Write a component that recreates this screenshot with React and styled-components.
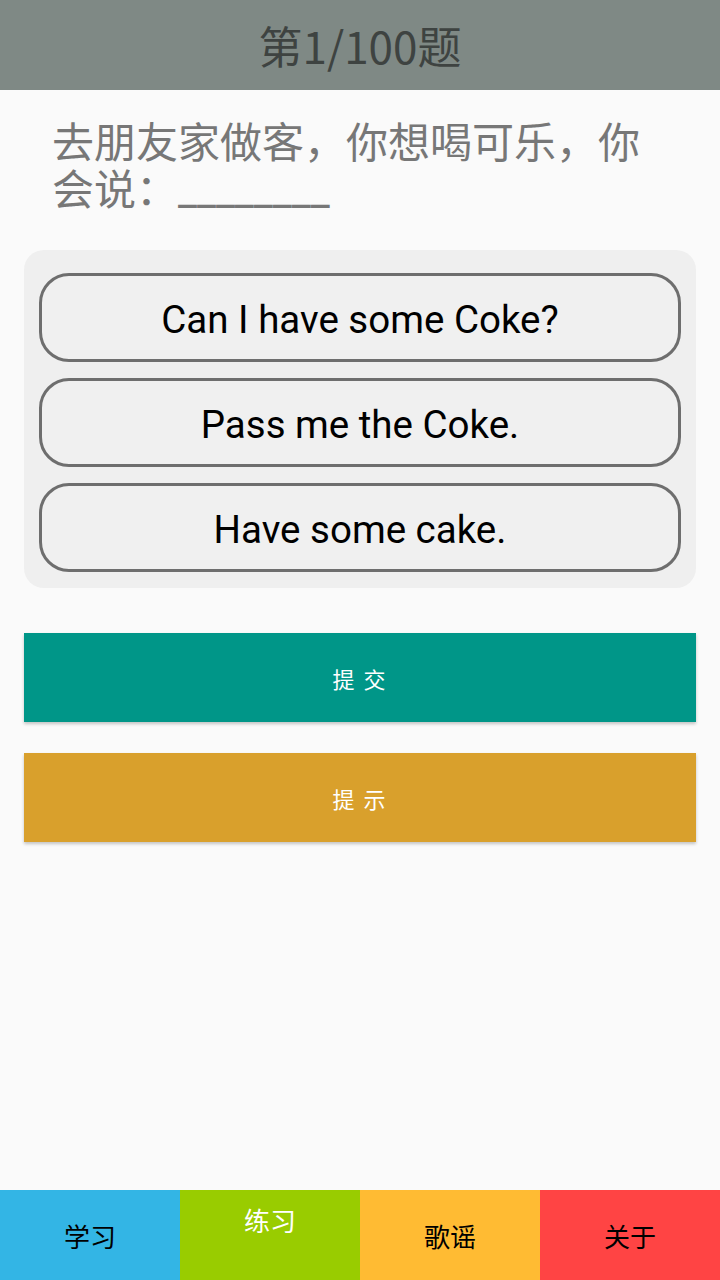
import React from "react";
import styled, { createGlobalStyle } from "styled-components";

const GlobalStyle = createGlobalStyle`
  html, body {
    margin: 0;
    padding: 0;
    background: #fafafa;
  }
  body {
    font-family: Roboto, "Noto Sans CJK SC", sans-serif;
  }
  * { box-sizing: border-box; }
`;

const Screen = styled.div`
  display: flex;
  flex-direction: column;
  min-height: 100vh;
  background: #fafafa;
`;

const Header = styled.header`
  height: 90px;
  background: #7f8985;
  display: flex;
  align-items: center;
  justify-content: center;
`;

const Title = styled.h1`
  margin: 0;
  font-family: "Noto Sans CJK SC", sans-serif;
  font-weight: 400;
  font-size: 44px;
  line-height: 1;
  color: #3e4341;
`;

const Question = styled.p`
  margin: 30px 0 0;
  padding: 0 52px;
  font-family: Roboto, "Noto Sans CJK SC", sans-serif;
  font-size: 42px;
  line-height: 47px;
  color: #777777;
`;

const OptionCard = styled.div`
  margin: 36px 24px 0;
  padding: 23px 15px 16px;
  background: #efefef;
  border-radius: 20px;
  display: flex;
  flex-direction: column;
  gap: 16px;
`;

const Option = styled.button`
  height: 89px;
  border: 3px solid #6e6e6e;
  border-radius: 30px;
  background: #f0f0f0;
  font-family: Roboto, sans-serif;
  font-size: 38.5px;
  color: #000000;
  display: flex;
  align-items: center;
  justify-content: center;
  padding: 3px 0 0;
`;

const ActionButton = styled.button`
  margin: ${(p) => p.$top}px 24px 0;
  height: 89px;
  border: none;
  border-radius: 0;
  background: ${(p) => p.$bg};
  box-shadow: 0 2px 3px rgba(0, 0, 0, 0.22);
  color: #ffffff;
  font-family: "Noto Sans CJK SC", sans-serif;
  font-size: 22px;
  letter-spacing: 2px;
  display: flex;
  align-items: center;
  justify-content: center;
`;

const NavBar = styled.nav`
  margin-top: auto;
  height: 90px;
  display: grid;
  grid-template-columns: repeat(4, 1fr);
`;

const NavItem = styled.div`
  background: ${(p) => p.$bg};
  color: ${(p) => (p.$active ? "#ffffff" : "#000000")};
  font-family: "Noto Sans CJK SC", sans-serif;
  font-size: 26px;
  display: flex;
  align-items: center;
  justify-content: center;
  padding-bottom: ${(p) => (p.$active ? 32 : 0)}px;
`;

const options = [
  "Can I have some Coke?",
  "Pass me the Coke.",
  "Have some cake.",
];

const tabs = [
  { label: "学习", bg: "#33b5e5" },
  { label: "练习", bg: "#99cc00", active: true },
  { label: "歌谣", bg: "#ffbb33" },
  { label: "关于", bg: "#ff4444" },
];

export default function App() {
  return (
    <>
      <GlobalStyle />
      <Screen>
        <Header>
          <Title>第1/100题</Title>
        </Header>
        <Question>去朋友家做客，你想喝可乐，你会说：________</Question>
        <OptionCard>
          {options.map((o) => (
            <Option key={o}>{o}</Option>
          ))}
        </OptionCard>
        <ActionButton $bg="#009688" $top={45}>提 交</ActionButton>
        <ActionButton $bg="#d9a02c" $top={31}>提 示</ActionButton>
        <NavBar>
          {tabs.map((t) => (
            <NavItem key={t.label} $bg={t.bg} $active={t.active}>
              {t.label}
            </NavItem>
          ))}
        </NavBar>
      </Screen>
    </>
  );
}
